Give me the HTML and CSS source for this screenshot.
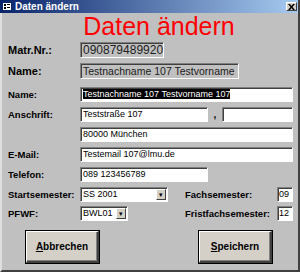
FILE: index.html
```html
<!DOCTYPE html>
<html lang="de">
<head>
  <meta charset="UTF-8">
  <title>Daten ändern</title>
  <link rel="stylesheet" href="styles.css">
</head>
<body>
  <div class="window">
    <!-- Titelleiste -->
    <div class="titlebar">
      <span class="app-icon">
        <svg width="8" height="7" viewBox="0 0 8 7"><rect x="0" y="0" width="8" height="7" fill="#fff"/><rect x="1" y="1" width="2" height="2" fill="#000"/><rect x="4" y="1" width="3" height="1" fill="#000"/><rect x="1" y="4" width="2" height="2" fill="#000"/><rect x="4" y="4" width="3" height="1" fill="#000"/></svg>
      </span>
      <span class="title">Daten ändern</span>
      <span class="close-btn">
        <svg width="7" height="6" viewBox="0 0 7 6"><path d="M0 0h2l1.5 2 1.5-2h2l-2.5 3 2.5 3h-2l-1.5-2-1.5 2h-2l2.5-3z" fill="#000"/></svg>
      </span>
    </div>

    <h1 class="heading">Daten ändern</h1>

    <div class="form">
      <div class="row row-top">
        <label>Matr.Nr.:</label>
        <div class="field readonly w-matr">090879489920</div>
      </div>
      <div class="row row-top2">
        <label>Name:</label>
        <div class="field readonly name-text w-name">Testnachname 107 Testvorname</div>
      </div>

      <div class="row row-name">
        <label>Name:</label>
        <div class="field w-full"><span class="selected">Testnachname 107 Testvorname 107</span></div>
      </div>
      <div class="row">
        <label>Anschrift:</label>
        <div class="field w-street">Teststraße 107</div>
        <span class="comma">,</span>
        <div class="field w-nr"></div>
      </div>
      <div class="row">
        <label></label>
        <div class="field w-full">80000 München</div>
      </div>
      <div class="row row-gap">
        <label>E-Mail:</label>
        <div class="field w-full">Testemail 107@lmu.de</div>
      </div>
      <div class="row">
        <label>Telefon:</label>
        <div class="field w-street">089 123456789</div>
      </div>
      <div class="row">
        <label>Startsemester:</label>
        <div class="field select w-sem">SS 2001<span class="arrow">&#9662;</span></div>
        <span class="label-right">Fachsemester:</span>
        <div class="field w-small">09</div>
      </div>
      <div class="row row-short">
        <label>PFWF:</label>
        <div class="field select w-pfwf">BWL01<span class="arrow">&#9662;</span></div>
        <span class="label-right">Fristfachsemester:</span>
        <div class="field w-small">12</div>
      </div>
    </div>

    <div class="buttons">
      <div class="btn-frame"><button type="button"><u>A</u>bbrechen</button></div>
      <div class="btn-frame"><button type="button"><u>S</u>peichern</button></div>
    </div>
  </div>
</body>
</html>
```

FILE: styles.css
```css
body {
  margin: 0;
  padding: 0;
  background: #c0c0c0;
  font-family: 'Liberation Sans', Arial, sans-serif;
}

.window {
  width: 300px;
  height: 272px;
  box-sizing: border-box;
  background: #c0c0c0;
  border-right: 2px solid #404040;
  border-bottom: 2px solid #404040;
  border-left: 2px solid #dfdfdf;
}

.titlebar {
  height: 13px;
  margin-left: -2px;
  display: flex;
  align-items: center;
  background: linear-gradient(to right, #0a246a, #a6caf0);
  color: white;
  font-size: 10px;
  font-weight: bold;
}

.app-icon {
  display: flex;
  margin: 0 4px 0 3px;
}

.title {
  flex: 1;
}

.close-btn {
  width: 11px;
  height: 9px;
  margin-right: 1px;
  display: flex;
  align-items: center;
  justify-content: center;
  background: #d4d0c8;
  border-top: 1px solid #fff;
  border-left: 1px solid #fff;
  border-right: 1px solid #404040;
  border-bottom: 1px solid #404040;
  box-sizing: border-box;
}

.heading {
  margin: 0;
  height: 29px;
  line-height: 27px;
  font-size: 25px;
  font-weight: normal;
  color: #ff0000;
  text-align: center;
  padding-left: 18px;
}

.form {
  padding-left: 6px;
}

.row {
  display: flex;
  align-items: center;
  height: 15px;
  margin-bottom: 5px;
}

.row label {
  width: 72px;
  font-size: 9.5px;
  font-weight: bold;
  color: #000;
}

.row-top {
  height: 16px;
  margin-bottom: 5px;
}

.row-top2 {
  height: 15px;
  margin-bottom: 9px;
}

.row-top label, .row-top2 label {
  font-size: 11px;
}

.row-gap {
  margin-top: 1px;
}

.row-short {
  margin-top: -1px;
}

.field {
  height: 15px;
  box-sizing: border-box;
  background: #fff;
  border-top: 1px solid #808080;
  border-left: 1px solid #808080;
  border-right: 1px solid #fff;
  border-bottom: 1px solid #fff;
  box-shadow: inset 1px 1px 0 #404040;
  font-size: 9px;
  line-height: 13px;
  padding-left: 2px;
  white-space: nowrap;
  overflow: hidden;
  color: #000;
}

.readonly {
  height: 16px;
  background: #c0c0c0;
  font-size: 12px;
  line-height: 14px;
  color: #202020;
}

.readonly.name-text {
  font-size: 10.5px;
}

.selected {
  background: #000;
  color: #fff;
}

.w-matr { width: 84px; }
.w-name { width: 159px; }
.w-full { width: 213px; }
.w-street { width: 128px; }
.w-nr { width: 71px; }
.w-sem { width: 88px; }
.w-pfwf { width: 48px; }
.w-small { width: 16px; padding-left: 1px; }

.comma {
  width: 14px;
  text-align: center;
  font-size: 10px;
  font-weight: bold;
}

.select {
  display: flex;
  justify-content: space-between;
  padding-right: 1px;
}

.arrow {
  width: 10px;
  height: 11px;
  margin-top: 1px;
  background: #d4d0c8;
  border-top: 1px solid #fff;
  border-left: 1px solid #fff;
  border-right: 1px solid #404040;
  border-bottom: 1px solid #404040;
  box-sizing: border-box;
  font-size: 7px;
  line-height: 9px;
  text-align: center;
}

.label-right {
  margin-left: auto;
  font-size: 9.5px;
  font-weight: bold;
  width: 92px;
}

.row .w-small {
  margin-right: 5px;
}

.buttons {
  display: flex;
  justify-content: space-between;
  padding: 4px 25px 0 23px;
}

.btn-frame {
  border: 1px solid #000;
  padding: 0;
}

.btn-frame button {
  display: block;
  width: 73px;
  height: 32px;
  background: #d4d0c8;
  border-top: 1px solid #fff;
  border-left: 1px solid #fff;
  border-right: 2px solid #404040;
  border-bottom: 2px solid #404040;
  box-shadow: inset -1px -1px 0 #808080;
  font-family: 'Liberation Sans', Arial, sans-serif;
  font-size: 10px;
  font-weight: bold;
  color: #000;
  padding: 0;
}
```
